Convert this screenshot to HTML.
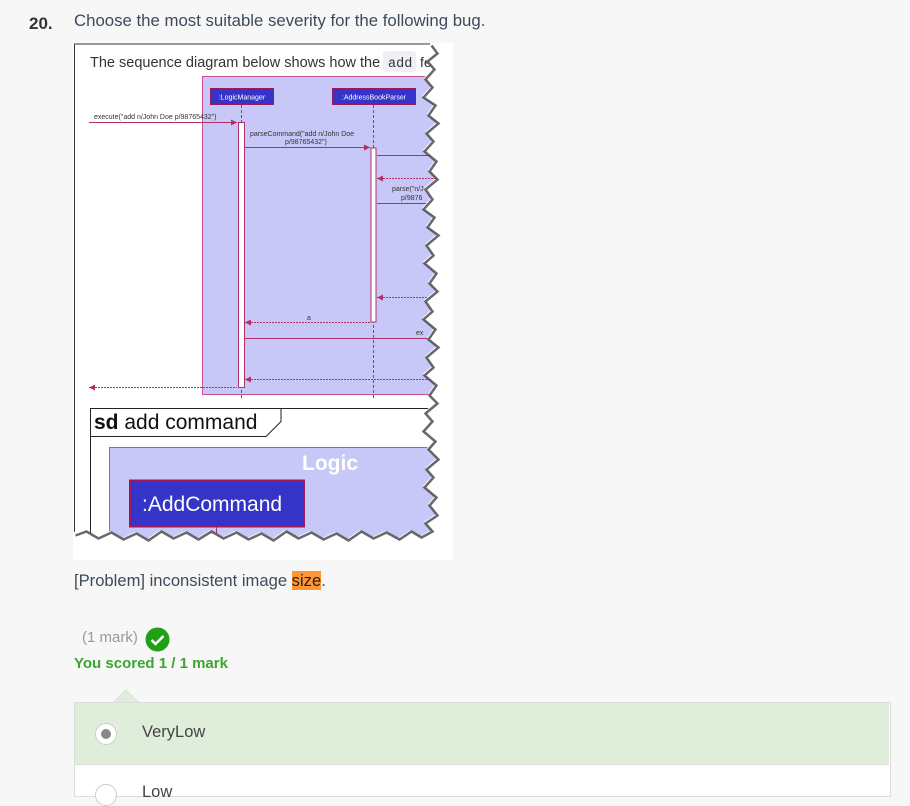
<!DOCTYPE html>
<html><head><meta charset="utf-8"><style>
body{margin:0;background:#f7f7f7;width:910px;height:795px;overflow:hidden;font-family:"Liberation Sans",sans-serif;position:relative}
.a{position:absolute;white-space:nowrap}
</style></head><body>
<div class="a" style="left:29px;top:14px;font-size:17px;font-weight:bold;color:#333">20.</div>
<div class="a" style="left:74px;top:11px;font-size:16.8px;color:#3d4a5c">Choose the most suitable severity for the following bug.</div>

<svg class="a" style="left:0;top:0" width="910" height="600" xmlns="http://www.w3.org/2000/svg">
<rect x="73" y="43" width="380" height="517" fill="#fff"/>
<line x1="74" y1="44" x2="432" y2="44" stroke="#333" stroke-width="1"/>
<line x1="74.5" y1="44" x2="74.5" y2="532" stroke="#333" stroke-width="1"/>
<text x="90" y="67" font-size="14.5" fill="#333">The sequence diagram below shows how the</text>
<rect x="383" y="51" width="33" height="21" rx="3" fill="#eef0f5"/>
<text x="388" y="67" font-size="13.5" font-family="Liberation Mono,monospace" fill="#333">add</text>
<text x="420" y="67" font-size="14" fill="#333">fe</text>
<rect x="202.5" y="76.5" width="240" height="318" fill="#c8c8f8" stroke="#c8508c"/>
<rect x="210.5" y="88.5" width="63" height="16" fill="#3434c8" stroke="#a0185a"/>
<text x="242" y="99.5" font-size="7" fill="#fff" text-anchor="middle">:LogicManager</text>
<rect x="332.5" y="88.5" width="83" height="16" fill="#3434c8" stroke="#a0185a"/>
<text x="374" y="99.5" font-size="7" fill="#fff" text-anchor="middle">:AddressBookParser</text>
<line x1="241.5" y1="105" x2="241.5" y2="398" stroke="#b0306a" stroke-dasharray="3,2"/>
<line x1="373.5" y1="105" x2="373.5" y2="398" stroke="#b0306a" stroke-dasharray="3,2"/>
<rect x="238.5" y="122.5" width="6" height="265" fill="#fff" stroke="#b0306a"/>
<rect x="371" y="148" width="5" height="174" fill="#fff" stroke="#b0306a"/>
<g stroke="#b0306a" fill="none">
<line x1="89" y1="122.5" x2="237" y2="122.5"/>
<line x1="245" y1="147.5" x2="370" y2="147.5"/>
<line x1="377" y1="155.5" x2="440" y2="155.5"/>
<line x1="377" y1="178.5" x2="440" y2="178.5" stroke-dasharray="2,1"/>
<line x1="377" y1="203.5" x2="440" y2="203.5"/>
<line x1="377" y1="297.5" x2="440" y2="297.5" stroke-dasharray="2,1"/>
<line x1="245" y1="322.5" x2="370" y2="322.5" stroke-dasharray="2,1"/>
<line x1="245" y1="338.5" x2="440" y2="338.5"/>
<line x1="245" y1="379.5" x2="440" y2="379.5" stroke-dasharray="2,1"/>
<line x1="89" y1="387.5" x2="237" y2="387.5" stroke-dasharray="2,1"/>
</g>
<g fill="#b0306a">
<path d="M237 122.5l-6-3v6z"/><path d="M370 147.5l-6-3v6z"/>
<path d="M377 178.5l6-3v6z"/><path d="M377 297.5l6-3v6z"/>
<path d="M245 322.5l6-3v6z"/><path d="M245 379.5l6-3v6z"/><path d="M89 387.5l6-3v6z"/>
</g>
<g font-size="7" fill="#333">
<text x="94" y="119">execute("add n/John Doe p/98765432")</text>
<text x="250" y="136">parseCommand("add n/John Doe</text>
<text x="285" y="144">p/98765432")</text>
<text x="392" y="191">parse("n/J</text>
<text x="401" y="200">p/9876</text>
<text x="307" y="320">a</text>
<text x="416" y="335">ex</text>
</g>
<line x1="90" y1="408.5" x2="440" y2="408.5" stroke="#222"/>
<line x1="90.5" y1="408" x2="90.5" y2="535" stroke="#222"/>
<path d="M90 436.5H266l15-15V408" fill="none" stroke="#222"/>
<text x="94" y="429" font-size="21" fill="#111"><tspan font-weight="bold">sd</tspan> add command</text>
<rect x="109.5" y="447.5" width="335" height="100" fill="#c8c8f8" stroke="#c8508c"/>
<text x="302" y="470" font-size="21" font-weight="bold" fill="#fff">Logic</text>
<rect x="130" y="480.5" width="174" height="46" fill="#3434c8" stroke="#a0185a" stroke-width="2"/>
<text x="142" y="511" font-size="21" fill="#fff">:AddCommand</text>
<line x1="216.5" y1="527" x2="216.5" y2="545" stroke="#b0306a"/>
<polygon fill="#fff" points="430,44 436,52 426,60 433,68 424,78 431,86 422,96 434,104 427,114 437,122 425,132 432,140 423,150 435,160 428,170 436,178 424,188 431,198 422,208 433,216 426,226 437,234 425,244 432,254 423,262 435,272 428,282 436,290 424,300 431,310 422,318 434,328 427,338 437,346 425,356 432,366 423,374 435,384 428,394 436,402 424,412 431,420 422,430 434,440 427,448 437,458 425,468 432,476 423,486 435,496 428,504 436,514 424,522 431,530 420,536 410,530 398,538 385,531 372,537 360,530 347,539 335,532 322,538 310,531 297,537 285,530 272,539 260,532 247,538 235,531 222,537 210,530 197,538 185,531 172,537 160,530 147,539 135,532 122,538 110,531 97,537 85,530 74,534 73,560 453,560 453,43 430,43"/>
<polyline fill="none" stroke="#444" stroke-width="2.5" transform="translate(1.5,1.5)" opacity="0.8" points="430,44 436,52 426,60 433,68 424,78 431,86 422,96 434,104 427,114 437,122 425,132 432,140 423,150 435,160 428,170 436,178 424,188 431,198 422,208 433,216 426,226 437,234 425,244 432,254 423,262 435,272 428,282 436,290 424,300 431,310 422,318 434,328 427,338 437,346 425,356 432,366 423,374 435,384 428,394 436,402 424,412 431,420 422,430 434,440 427,448 437,458 425,468 432,476 423,486 435,496 428,504 436,514 424,522 431,530 420,536 410,530 398,538 385,531 372,537 360,530 347,539 335,532 322,538 310,531 297,537 285,530 272,539 260,532 247,538 235,531 222,537 210,530 197,538 185,531 172,537 160,530 147,539 135,532 122,538 110,531 97,537 85,530 74,534"/>
</svg>

<div class="a" style="left:74px;top:571px;font-size:16.6px;color:#3d4a5c">[Problem] inconsistent image <span style="background:#ff9632;color:#222">size</span>.</div>
<div class="a" style="left:82px;top:629px;font-size:15px;color:#999">(1 mark)</div>
<svg class="a" style="left:145px;top:627px" width="25" height="25"><circle cx="12.5" cy="12.5" r="12" fill="#21a015"/><path d="M6.5 13l4 4 8-8" stroke="#fff" stroke-width="2.5" fill="none"/></svg>
<div class="a" style="left:74px;top:655px;font-size:15px;font-weight:bold;color:#3aa62d">You scored 1 / 1 mark</div>
<svg class="a" style="left:112px;top:689px" width="30" height="15"><path d="M0 14.5L14 1 28 14.5" fill="#dfeddb" stroke="#e0e0e0"/></svg>
<div class="a" style="left:74px;top:702px;width:815px;height:93px;border:1px solid #ddd;background:#fff"></div>
<div class="a" style="left:75px;top:703px;width:814px;height:61px;background:#dfeddb;border-bottom:1px solid #ddd"></div>
<div class="a" style="left:95px;top:723px;width:20px;height:20px;border-radius:50%;background:#fff;border:1px solid #ccc"></div>
<div class="a" style="left:101px;top:729px;width:10px;height:10px;border-radius:50%;background:#888"></div>
<div class="a" style="left:142px;top:723px;font-size:16.5px;color:#444">VeryLow</div>
<div class="a" style="left:95px;top:784px;width:20px;height:20px;border-radius:50%;background:#fff;border:1px solid #ccc"></div>
<div class="a" style="left:142px;top:783px;font-size:16.5px;color:#444">Low</div>
</body></html>
